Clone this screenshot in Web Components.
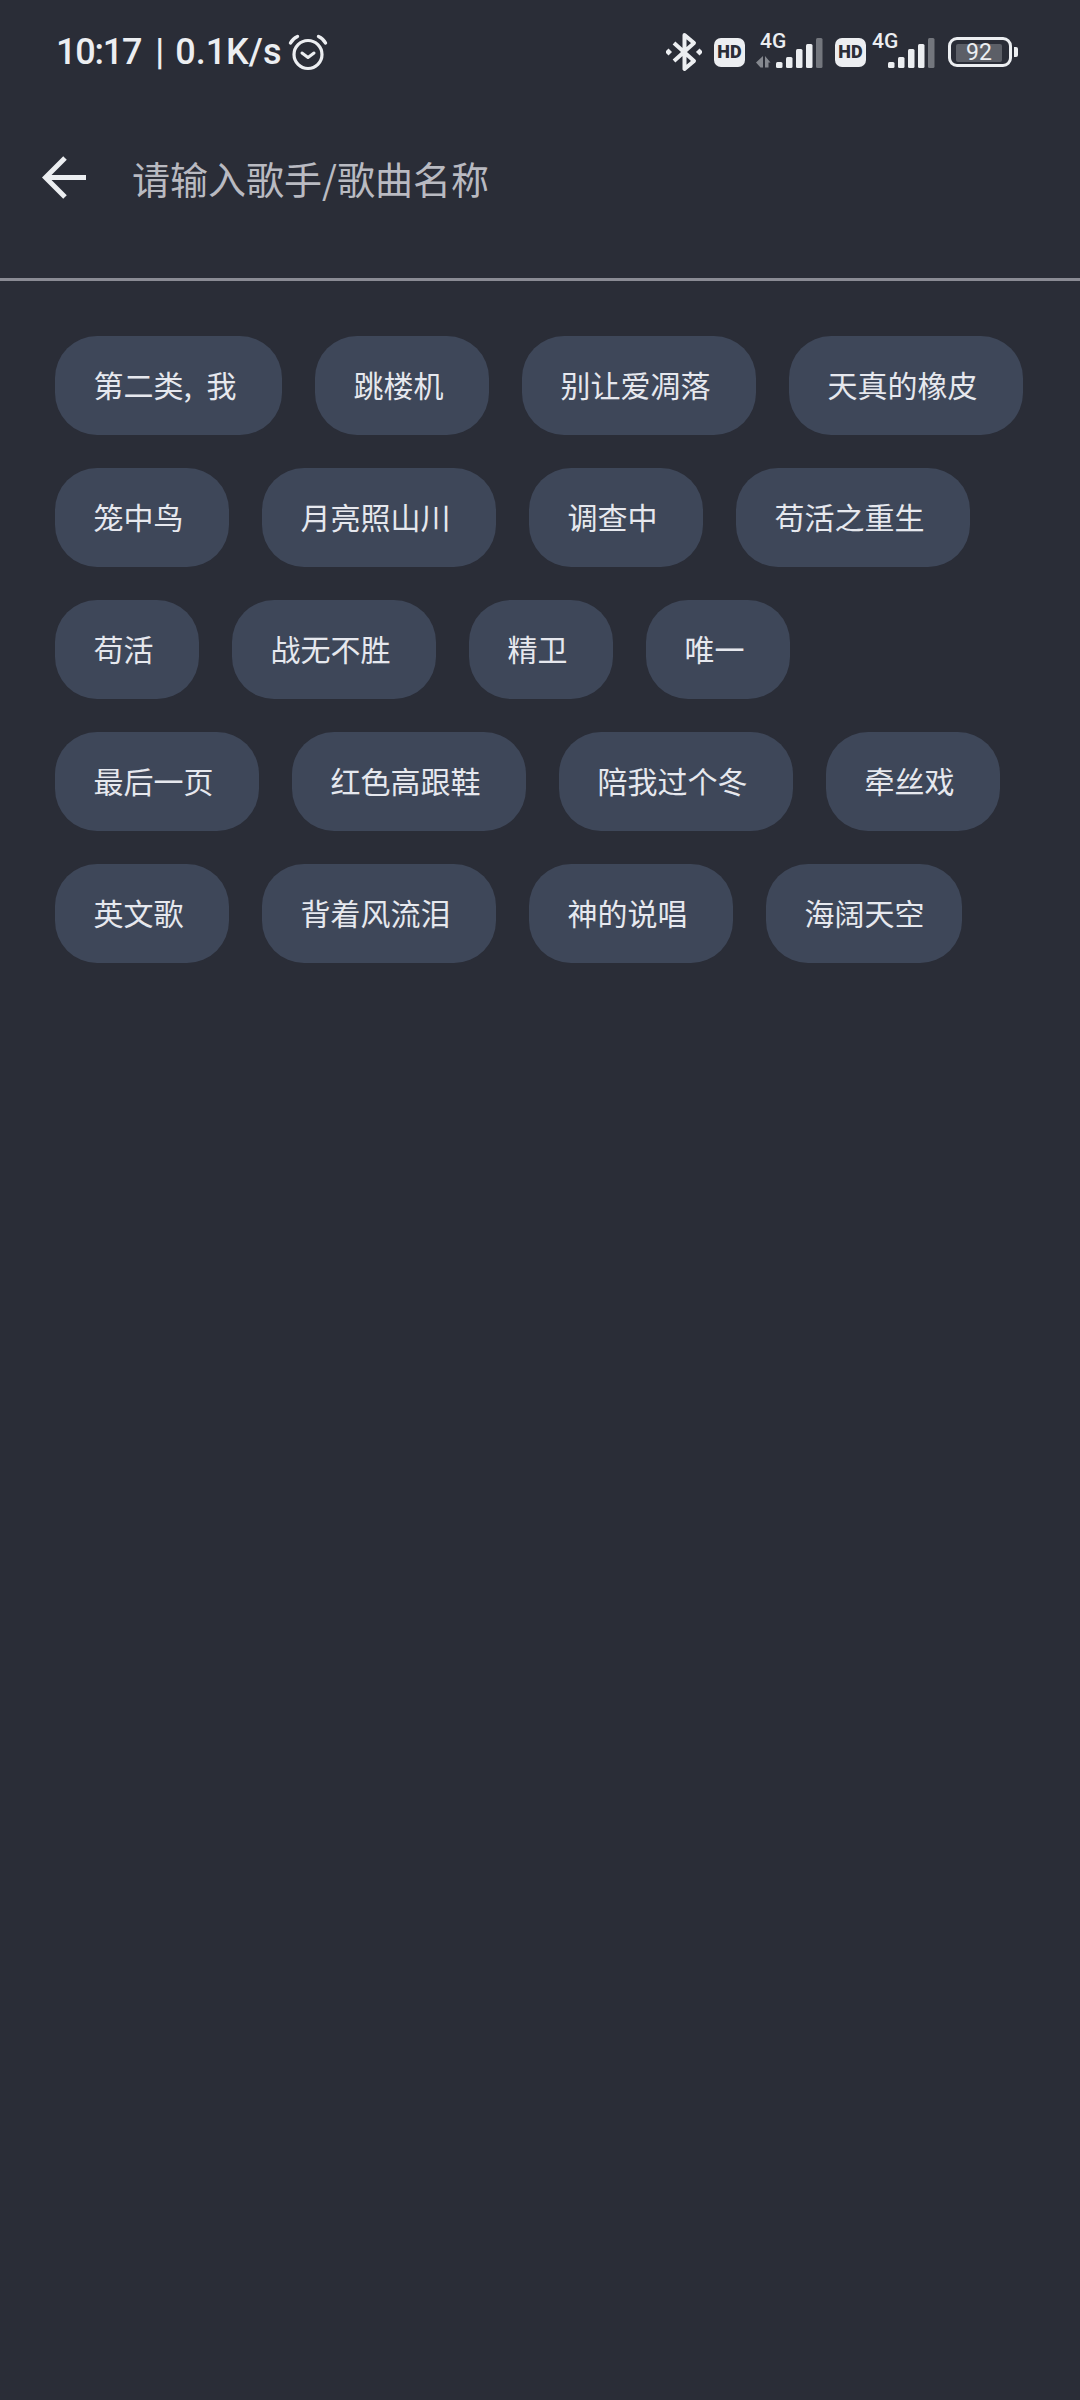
<!DOCTYPE html>
<html lang="zh">
<head>
<meta charset="utf-8">
<title>搜索</title>
<style>
  html,body{margin:0;height:100%;background:#2a2d37;}
  body{font-family:"Noto Sans CJK SC","Noto Sans",sans-serif;}
</style>
</head>
<body>
<search-page></search-page>
<script>
(function(w, doc) {
  'use strict';

  const FONT_UI = '"Roboto","Noto Sans CJK SC",sans-serif';

  class HdBadge extends HTMLElement {
    constructor() {
      super();
      this.attachShadow({ mode: 'open' });
      this.shadowRoot.innerHTML = `
        <style>
          :host{
            display:flex;
            align-items:center;
            justify-content:center;
            width:31px;
            height:29px;
            border-radius:7px;
            background:#eceef1;
            color:#2a2d37;
            font:900 18px/1 ${FONT_UI};
          }
        </style>
        <span>HD</span>`;
    }
  }

  class SignalIcon extends HTMLElement {
    connectedCallback() {
      const arrows = this.hasAttribute('data-arrows');
      const off = arrows ? 20 : 0;
      const bars = [[0, 6], [10, 11], [20, 19], [30, 24], [40, 30]];
      const rects = bars.map(([x, h], i) => {
        const fill = i === 4 ? '#73767d' : '#eceef1';
        return `<rect x="${x + off}" y="${31 - h}" width="6.5" height="${h}" rx="1.5" fill="${fill}"/>`;
      }).join('');
      const arrowMarks = arrows
        ? `<path d="M7 19v11.500H4.500L0 25.500zM9 19l5.500 6.500H12.500v5H9z" fill="#85888f"/>`
        : '';
      this.attachShadow({ mode: 'open' }).innerHTML = `
        <style>
          :host{
            display:block;
            position:relative;
            width:${off + 47}px;
            height:31px;
            color:#eceef1;
            font:500 21px/1 ${FONT_UI};
          }
          svg{display:block;}
          span{position:absolute;top:-6px;left:${arrows ? 4 : -16}px;}
        </style>
        <svg width="${off + 47}" height="31" viewBox="0 0 ${off + 47} 31">${arrowMarks}${rects}</svg>
        <span>4G</span>`;
    }
  }

  class BatteryIcon extends HTMLElement {
    constructor() {
      super();
      this.attachShadow({ mode: 'open' });
      this.shadowRoot.innerHTML = `
        <style>
          :host{
            display:flex;
            align-items:center;
            gap:2px;
          }
          .body{
            box-sizing:border-box;
            width:64px;
            height:30px;
            padding:4px 5px;
            border:3px solid #eceef1;
            border-radius:9px;
          }
          .level{
            width:46px;
            height:18px;
            border-radius:2px;
            background:#5c5f67;
            color:#eceef1;
            text-align:center;
            font:400 23px/18px ${FONT_UI};
          }
          .nub{
            width:4px;
            height:10px;
            border-radius:0 2px 2px 0;
            background:#eceef1;
          }
        </style>
        <div class="body"><div class="level"><slot></slot></div></div>
        <div class="nub"></div>`;
    }
  }

  class StatusBar extends HTMLElement {
    constructor() {
      super();
      this.attachShadow({ mode: 'open' });
      this.shadowRoot.innerHTML = `
        <style>
          :host{
            display:flex;
            justify-content:space-between;
            align-items:center;
            box-sizing:border-box;
            height:104px;
            padding:0 62px 0 56px;
            color:#eceef1;
          }
          .left,.right{display:flex;align-items:center;}
          .time{font:500 36px/1 ${FONT_UI};white-space:pre;}
          .clock{letter-spacing:-1.2px;margin-right:5px;}
          .sep{margin-right:2px;}
          .alarm{margin-left:7px;}
          .bt{margin-right:12px;}
          signal-icon.first{margin-left:11px;}
          signal-icon.second{margin-left:22px;margin-right:13px;}
          hd-badge.two{margin-left:12px;}
        </style>
        <div class="left">
          <span class="time"><span class="clock">10:17</span> <span class="sep">|</span> 0.1K/s</span>
          <svg class="alarm" width="40" height="38" viewBox="0 0 40 38" fill="none" stroke="#eceef1" stroke-linecap="round" stroke-linejoin="round">
            <circle cx="20" cy="21.500" r="14" stroke-width="3.200"/>
            <path d="M14 20l6 4.500 6-4.500" stroke-width="3"/>
            <path d="M2.500 10C4 7 6.500 4.800 9.500 3.500M37.500 10C36 7 33.500 4.800 30.500 3.500" stroke-width="3.400"/>
          </svg>
        </div>
        <div class="right">
          <svg class="bt" width="36" height="40" viewBox="0 0 36 40" fill="none" stroke="#eceef1" stroke-width="4" stroke-linejoin="round">
            <path d="M8 11l20 18-9.500 8V3L28 11 8 29"/>
            <rect x="0" y="17.500" width="5" height="5" transform="rotate(45 2.500 20)" fill="#eceef1" stroke="none"/>
            <rect x="31" y="17.500" width="5" height="5" transform="rotate(45 33.500 20)" fill="#eceef1" stroke="none"/>
          </svg>
          <hd-badge></hd-badge>
          <signal-icon class="first" data-arrows></signal-icon>
          <hd-badge class="two"></hd-badge>
          <signal-icon class="second"></signal-icon>
          <battery-icon>92</battery-icon>
        </div>`;
    }
  }

  class SearchBar extends HTMLElement {
    constructor() {
      super();
      this.attachShadow({ mode: 'open' });
      this.shadowRoot.innerHTML = `
        <style>
          :host{
            display:flex;
            align-items:flex-start;
            box-sizing:border-box;
            height:177px;
            padding-left:42px;
            border-bottom:3px solid #8a8b94;
          }
          svg{flex:none;display:block;margin-top:52px;}
          span{
            margin-left:46px;
            margin-top:47px;
            color:#b9bac1;
            font-size:38px;
            line-height:54px;
          }
        </style>
        <svg width="44" height="44" viewBox="0 0 44 44" fill="none" stroke="#eceef1" stroke-width="5">
          <path d="M44 21.500H4"/>
          <path d="M23 2L3.500 21.500 23 41"/>
        </svg>
        <span><slot></slot></span>`;
    }
  }

  class TagChip extends HTMLElement {
    constructor() {
      super();
      this.attachShadow({ mode: 'open' });
      this.shadowRoot.innerHTML = `
        <style>
          :host{
            display:flex;
            align-items:center;
            box-sizing:border-box;
            height:99px;
            padding:0 45.500px 3px 38.500px;
            border-radius:42px;
            background:#3e4759;
            color:#e6e8ee;
            font-size:30px;
            word-spacing:8px;
            white-space:nowrap;
          }
          :host([compact]){
            padding-right:37.500px;
          }
        </style>
        <slot></slot>`;
    }
  }

  class TagList extends HTMLElement {
    constructor() {
      super();
      this.attachShadow({ mode: 'open' });
      this.shadowRoot.innerHTML = `
        <style>
          :host{
            display:flex;
            flex-wrap:wrap;
            gap:33px;
            padding:55px 55px 0;
          }
        </style>
        <slot></slot>`;
    }

    set tags(list) {
      this.replaceChildren(...list.map(name => {
        const chip = doc.createElement('tag-chip');
        chip.textContent = name;
        if (name === '海阔天空') chip.setAttribute('compact', '');
        return chip;
      }));
    }
  }

  const TAGS = [
    '第二类, 我', '跳楼机', '别让爱凋落', '天真的橡皮',
    '笼中鸟', '月亮照山川', '调查中', '苟活之重生',
    '苟活', '战无不胜', '精卫', '唯一',
    '最后一页', '红色高跟鞋', '陪我过个冬', '牵丝戏',
    '英文歌', '背着风流泪', '神的说唱', '海阔天空'
  ];

  class SearchPage extends HTMLElement {
    constructor() {
      super();
      this.attachShadow({ mode: 'open' });
      this.shadowRoot.innerHTML = `
        <style>
          :host{
            display:block;
            min-height:2400px;
            background:#2a2d37;
          }
        </style>
        <status-bar></status-bar>
        <search-bar>请输入歌手/歌曲名称</search-bar>
        <tag-list></tag-list>`;
    }

    connectedCallback() {
      this.shadowRoot.querySelector('tag-list').tags = TAGS;
    }
  }

  customElements.define('hd-badge', HdBadge);
  customElements.define('signal-icon', SignalIcon);
  customElements.define('battery-icon', BatteryIcon);
  customElements.define('status-bar', StatusBar);
  customElements.define('search-bar', SearchBar);
  customElements.define('tag-chip', TagChip);
  customElements.define('tag-list', TagList);
  customElements.define('search-page', SearchPage);

})(window, document);
</script>
</body>
</html>
